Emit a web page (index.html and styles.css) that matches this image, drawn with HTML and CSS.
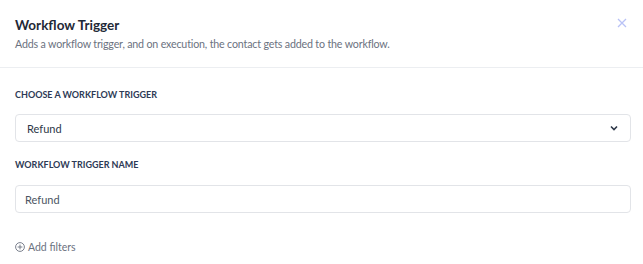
FILE: index.html
```html
<!DOCTYPE html>
<html lang="en">
<head>
  <meta charset="UTF-8" />
  <title>Workflow Trigger</title>
  <link rel="stylesheet" href="styles.css">
</head>
<body>

  <!-- Modal header -->
  <div class="modal-header">
    <div class="header-text">
      <h3 class="title">Workflow Trigger</h3>
      <p class="subtitle">Adds a workflow trigger, and on execution, the contact gets added to the workflow.</p>
    </div>
    <button class="close-btn" aria-label="Close">
      <svg width="10" height="10" viewBox="0 0 10 10">
        <path d="M1 1 L9 9 M9 1 L1 9" stroke="#b9c2f6" stroke-width="1.3" fill="none"/>
      </svg>
    </button>
  </div>

  <!-- Form -->
  <div class="modal-body">
    <label class="field-label">Choose a workflow trigger</label>
    <div class="select-box">
      <span>Refund</span>
      <svg class="chevron" width="8" height="6" viewBox="0 0 8 6">
        <path d="M1 1.5 L4 4.5 L7 1.5" stroke="#2d3748" stroke-width="1.6" fill="none"/>
      </svg>
    </div>

    <label class="field-label second">Workflow trigger name</label>
    <input class="text-input" type="text" value="Refund">

    <div class="add-filters">
      <svg width="10" height="10" viewBox="0 0 10 10">
        <circle cx="5" cy="5" r="4.4" stroke="#6b7280" stroke-width="0.9" fill="none"/>
        <path d="M5 2.6 V7.4 M2.6 5 H7.4" stroke="#6b7280" stroke-width="0.9"/>
      </svg>
      <span>Add filters</span>
    </div>
  </div>

</body>
</html>
```

FILE: styles.css
```css
body {
  margin: 0;
  font-family: 'Lato', 'Open Sans', sans-serif;
  background: #fff;
  color: #2d3748;
}
.modal-header {
  display: flex;
  justify-content: space-between;
  align-items: flex-start;
  padding: 16px 15px 15px 15px;
  border-bottom: 1px solid #eceef1;
}
.title {
  margin: 0;
  font-size: 13.5px;
  line-height: 18px;
  font-weight: 700;
  color: #1f2937;
}
.subtitle {
  margin: 2px 0 0;
  font-size: 10.7px;
  letter-spacing: -0.18px;
  line-height: 16px;
  color: #6b7280;
}
.close-btn {
  border: none;
  background: none;
  padding: 0;
  margin: 2px 1px 0 0;
  cursor: pointer;
  line-height: 0;
}
.modal-body {
  padding: 21px 12px 0 15px;
  display: flex;
  flex-direction: column;
}
.field-label {
  font-size: 9px;
  line-height: 12px;
  font-weight: 700;
  text-transform: uppercase;
  color: #2d3a55;
}
.field-label.second {
  margin-top: 17px;
}
.select-box {
  margin-top: 13px;
  height: 26px;
  border: 1px solid #e2e4e8;
  border-radius: 4px;
  display: flex;
  align-items: center;
  justify-content: space-between;
  padding: 0 12px 0 11px;
  font-size: 11px;
  color: #2d3748;
}
.text-input {
  margin-top: 14px;
  height: 28px;
  box-sizing: border-box;
  border: 1px solid #e2e4e8;
  border-radius: 4px;
  padding: 0 9px;
  font-family: inherit;
  font-size: 11px;
  color: #4b5563;
  outline: none;
}
.add-filters {
  margin-top: 26px;
  display: flex;
  align-items: center;
  gap: 3px;
  font-size: 10.5px;
  line-height: 16px;
  color: #6b7280;
  cursor: pointer;
}
```
